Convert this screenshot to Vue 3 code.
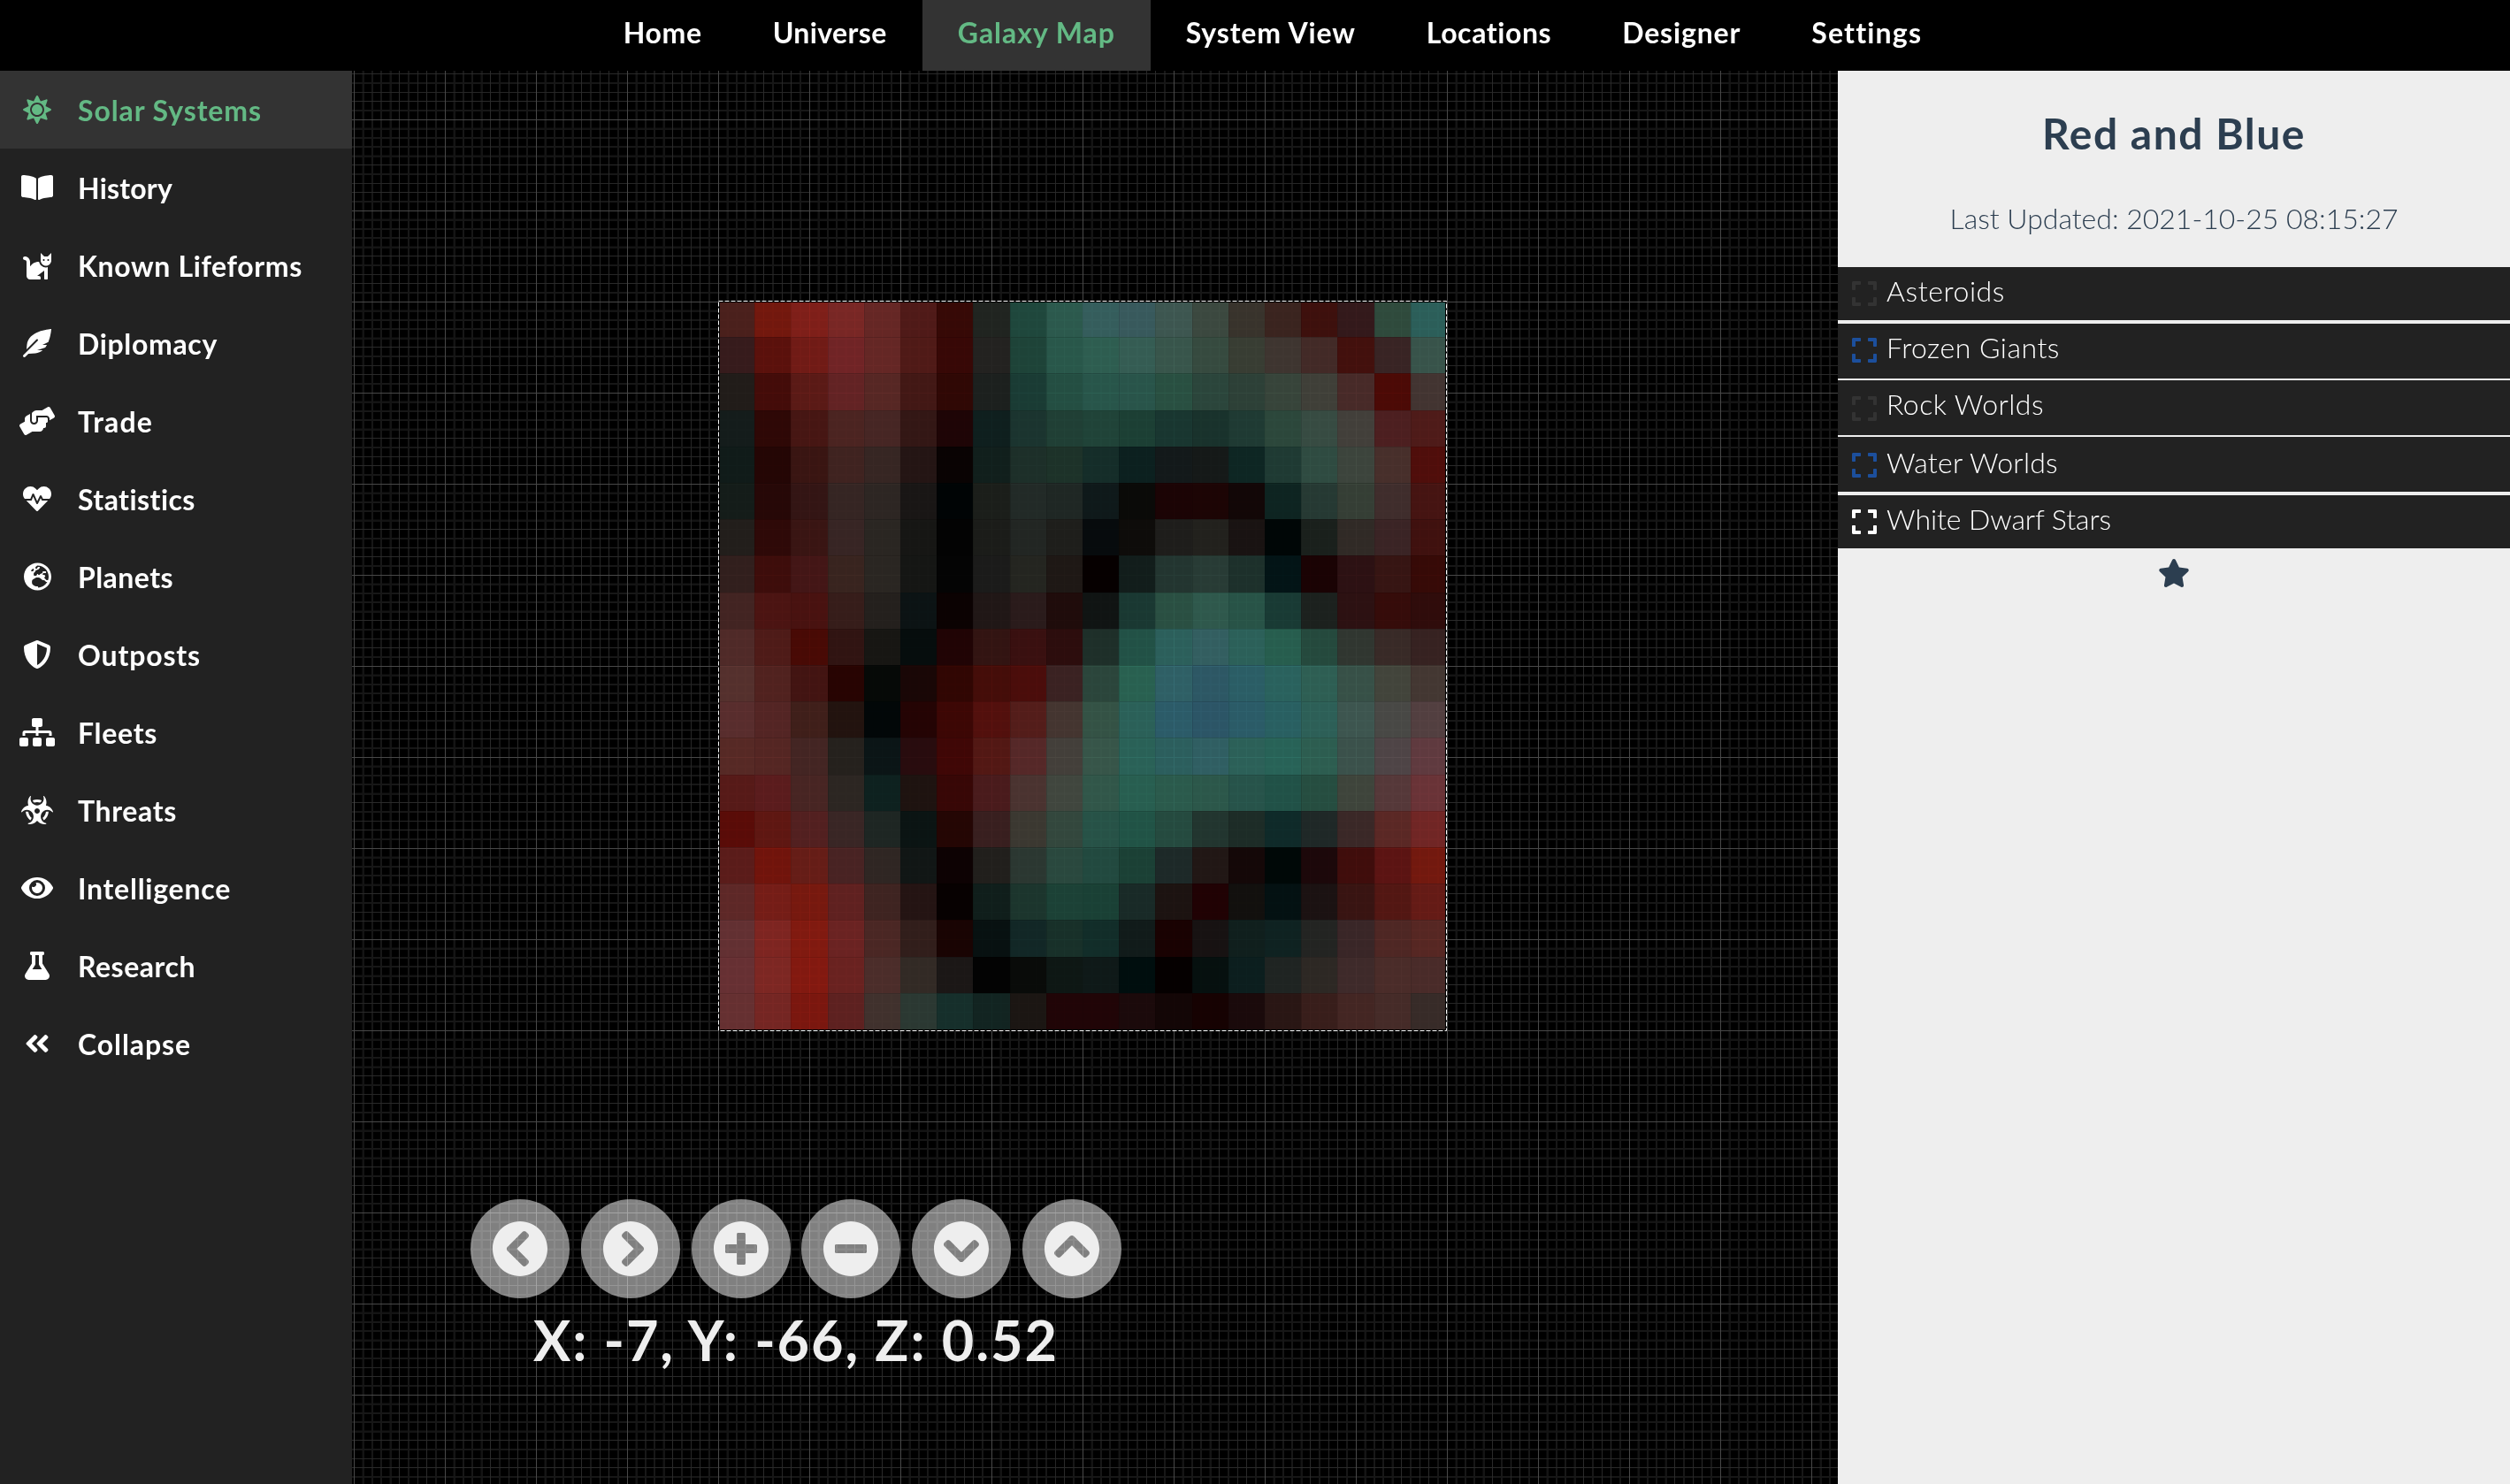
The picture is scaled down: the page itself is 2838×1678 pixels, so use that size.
<script setup>
const tabs = [
  { label: 'Home', width: 89 },
  { label: 'Universe', width: 129 },
  { label: 'Galaxy Map', width: 178, active: true },
  { label: 'System View', width: 192 },
  { label: 'Locations', width: 142 },
  { label: 'Designer', width: 134 },
  { label: 'Settings', width: 124 }
]

const menu = [
  { label: 'Solar Systems', width: 208, w: 512, active: true, path: 'M256 160c-52.9 0-96 43.1-96 96s43.1 96 96 96 96-43.1 96-96-43.1-96-96-96zm246.4 80.5l-94.7-47.3 33.5-100.4c4.5-13.6-8.4-26.5-21.9-21.9l-100.4 33.5-47.4-94.8c-6.4-12.8-24.6-12.8-31 0l-47.3 94.7L92.7 70.8c-13.6-4.5-26.5 8.4-21.9 21.9l33.5 100.4-94.7 47.4c-12.8 6.4-12.8 24.6 0 31l94.7 47.3-33.5 100.5c-4.5 13.6 8.4 26.5 21.9 21.9l100.4-33.5 47.3 94.7c6.4 12.8 24.6 12.8 31 0l47.3-94.7 100.4 33.5c13.6 4.5 26.5-8.4 21.9-21.9l-33.5-100.4 94.7-47.3c13-6.5 13-24.7.2-31.1zm-155.9 106c-49.9 49.9-131.1 49.9-181 0-49.9-49.9-49.9-131.1 0-181 49.9-49.9 131.1-49.9 181 0 49.9 49.9 49.9 131.1 0 181z' },
  { label: 'History', width: 107, w: 576, path: 'M542.22 32.05c-54.8 3.11-163.72 14.43-230.96 55.59-4.64 2.84-7.27 7.89-7.27 13.17v363.87c0 11.55 12.63 18.85 23.28 13.49 69.18-34.82 169.23-44.32 218.7-46.92 16.89-.89 30.02-14.43 30.02-30.66V62.75c.01-17.71-15.35-31.74-33.77-30.7zM264.73 87.64C197.5 46.48 88.58 35.17 33.78 32.05 15.36 31.01 0 45.04 0 62.75V400.6c0 16.24 13.13 29.78 30.02 30.66 49.49 2.6 149.59 12.11 218.77 46.95 10.62 5.35 23.21-1.94 23.21-13.46V100.63c0-5.29-2.62-10.14-7.27-12.99z' },
  { label: 'Known Lifeforms', width: 254, w: 512, path: 'M290.59 192c-20.18 0-106.82 1.98-162.59 85.95V192c0-52.94-43.06-96-96-96-17.67 0-32 14.33-32 32s14.33 32 32 32c17.64 0 32 14.36 32 32v256c0 35.3 28.7 64 64 64h176c8.84 0 16-7.16 16-16v-16c0-17.67-14.33-32-32-32h-32l128-96v144c0 8.84 7.16 16 16 16h32c8.84 0 16-7.16 16-16V289.86c-10.29 2.67-20.89 4.54-32 4.54-61.81 0-113.52-44.05-125.41-102.4zM448 96h-64l-64-64v134.4c0 53.02 42.98 96 96 96s96-42.98 96-96V32l-64 64zm-72 80c-8.84 0-16-7.16-16-16s7.16-16 16-16 16 7.16 16 16-7.16 16-16 16zm80 0c-8.84 0-16-7.16-16-16s7.16-16 16-16 16 7.16 16 16-7.16 16-16 16z' },
  { label: 'Diplomacy', width: 158, w: 512, path: 'M512 0C460.22 3.56 96.44 38.2 71.01 287.61c-3.09 26.66-4.84 53.44-5.99 80.24l178.87-178.69c6.25-6.25 16.4-6.25 22.65 0s6.25 16.38 0 22.63L7.04 471.03c-9.38 9.37-9.38 24.57 0 33.94 9.38 9.37 24.59 9.37 33.98 0l57.13-57.07c42.09-.14 84.15-2.53 125.96-7.36 53.48-5.44 97.02-26.47 132.58-56.54H255.74l146.79-48.88c11.25-14.89 21.37-30.71 30.45-47.12h-81.14l106.54-53.21C500.29 132.86 510.19 26.26 512 0z' },
  { label: 'Trade', width: 85, w: 640, path: 'M488 192H336v56c0 39.7-32.3 72-72 72s-72-32.3-72-72V126.4l-64.9 39C107.8 176.9 96 197.8 96 220.2v47.3l-80 46.2C.7 322.5-4.6 342.1 4.3 357.4l80 138.6c8.8 15.3 28.4 20.5 43.7 11.7L231.4 448H368c35.3 0 64-28.7 64-64h16c17.7 0 32-14.3 32-32v-64h8c13.3 0 24-10.7 24-24v-48c0-13.3-10.7-24-24-24zm147.7-37.4L555.7 16C546.9.7 527.3-4.5 512 4.3L408.6 64H306.4c-12 0-23.7 3.4-33.9 9.7L239 94.6c-9.4 5.8-15 16.1-15 27.1V248c0 22.1 17.9 40 40 40s40-17.9 40-40v-88h184c30.9 0 56 25.1 56 56v28.5l80-46.2c15.3-8.9 20.5-28.4 11.7-43.7z' },
  { label: 'Statistics', width: 134, w: 512, path: 'M320.2 243.8l-49.7 99.4c-6 12.1-23.4 11.7-28.9-.6l-56.9-126.3-30 71.7H60.6l182.5 186.5c7.1 7.3 18.6 7.3 25.7 0L451.4 288H342.3l-22.1-44.2zM473.7 73.9l-2.4-2.5c-51.5-52.6-135.8-52.6-187.4 0L256 100l-27.9-28.5c-51.5-52.7-135.9-52.7-187.4 0l-2.4 2.4C-10.4 123.7-12.5 203 31 256h102.4l35.9-86.2c5.4-12.9 23.6-13.1 29.4-.4l58.2 129.3 49-97.9c5.9-11.8 22.7-11.8 28.6 0l27.6 55.2H481c43.5-53 41.4-132.3-7.3-182.1z' },
  { label: 'Planets', width: 108, w: 496, path: 'M248 8C111 8 0 119 0 256s111 248 248 248 248-111 248-248S385 8 248 8zm200 248c0 22.5-3.9 44.2-10.8 64.4h-20.3c-4.3 0-8.4-1.7-11.4-4.8l-32-32.6c-4.5-4.6-4.5-12.1.1-16.7l12.5-12.5v-8.7c0-3-1.2-5.9-3.3-8l-9.4-9.4c-2.1-2.1-5-3.3-8-3.3h-16c-6.2 0-11.3-5.1-11.3-11.3 0-3 1.2-5.9 3.3-8l9.4-9.4c2.1-2.1 5-3.3 8-3.3h32c6.2 0 11.3-5.1 11.3-11.3v-9.4c0-6.2-5.1-11.3-11.3-11.3h-36.7c-8.8 0-16 7.2-16 16v4.5c0 6.9-4.4 13-10.9 15.2l-31.6 10.5c-3.3 1.1-5.5 4.1-5.5 7.6v2.2c0 4.4-3.6 8-8 8h-16c-4.4 0-8-3.6-8-8s-3.6-8-8-8H247c-3 0-5.8 1.7-7.2 4.4l-9.4 18.7c-2.7 5.4-8.2 8.8-14.3 8.8H194c-8.8 0-16-7.2-16-16V199c0-4.2 1.7-8.3 4.7-11.3l20.1-20.1c4.6-4.6 7.2-10.9 7.2-17.5 0-3.4 2.2-6.5 5.5-7.6l40-13.3c1.7-.6 3.2-1.5 4.4-2.7l26.8-26.8c2.1-2.1 3.3-5 3.3-8 0-6.2-5.1-11.3-11.3-11.3H258l-16 16v8c0 4.4-3.6 8-8 8h-16c-4.4 0-8-3.6-8-8v-20c0-2.5 1.2-4.9 3.2-6.4l28.9-21.7c1.9-.1 3.8-.3 5.7-.3C358.3 56 448 145.7 448 256zM130.1 149.1c0-3 1.2-5.9 3.3-8l25.4-25.4c2.1-2.1 5-3.3 8-3.3 6.2 0 11.3 5.1 11.3 11.3v16c0 3-1.2 5.9-3.3 8l-9.4 9.4c-2.1 2.1-5 3.3-8 3.3h-16c-6.2 0-11.3-5.1-11.3-11.3zm128 306.4v-7.1c0-8.8-7.2-16-16-16h-20.2c-10.8 0-26.7-5.3-35.4-11.8l-22.2-16.7c-11.5-8.6-18.2-22.1-18.2-36.4v-23.9c0-16 8.4-30.8 22.1-39l42.9-25.7c7.1-4.2 15.2-6.5 23.4-6.5h31.2c10.9 0 21.4 3.9 29.6 10.9l43.2 37.1h18.3c8.5 0 16.6 3.4 22.6 9.4l17.3 17.3c3.4 3.4 8.1 5.3 12.9 5.3H423c-32.4 58.9-93.8 99.5-164.9 103.1z' },
  { label: 'Outposts', width: 139, w: 512, path: 'M466.5 83.7l-192-80a48.15 48.15 0 0 0-36.9 0l-192 80C27.7 91.1 16 108.6 16 128c0 198.5 114.5 335.7 221.5 380.3 11.8 4.9 25.1 4.9 36.9 0C360.1 472.6 496 349.3 496 128c0-19.4-11.7-36.9-29.5-44.3zM256.1 446.3l-.1-381 175.9 73.3c-3.3 151.4-82.1 261.1-175.8 307.7z' },
  { label: 'Fleets', width: 90, w: 640, path: 'M128 352H32c-17.67 0-32 14.33-32 32v96c0 17.67 14.33 32 32 32h96c17.67 0 32-14.33 32-32v-96c0-17.67-14.33-32-32-32zm-24-80h192v48h48v-48h192v48h48v-57.59c0-21.17-17.23-38.41-38.41-38.41H344v-64h40c17.67 0 32-14.33 32-32V32c0-17.67-14.33-32-32-32H256c-17.67 0-32 14.33-32 32v96c0 17.67 14.33 32 32 32h40v64H94.41C73.23 224 56 241.23 56 262.41V320h48v-48zm264 80h-96c-17.67 0-32 14.33-32 32v96c0 17.67 14.33 32 32 32h96c17.67 0 32-14.33 32-32v-96c0-17.67-14.33-32-32-32zm240 0h-96c-17.67 0-32 14.33-32 32v96c0 17.67 14.33 32 32 32h96c17.67 0 32-14.33 32-32v-96c0-17.67-14.33-32-32-32z' },
  { label: 'Threats', width: 112, w: 576, path: 'M287.9 112c18.6 0 36.2 3.8 52.8 9.6 13.3-10.3 23.6-24.3 29.5-40.7-25.2-10.9-53-17-82.2-17-29.1 0-56.9 6-82.1 16.9 5.9 16.4 16.2 30.4 29.5 40.7 16.5-5.7 34-9.5 52.5-9.5zM163.6 438.7c12-11.8 20.4-26.4 24.5-42.4-32.9-26.4-54.8-65.3-58.9-109.6-8.5-2.8-17.2-4.6-26.4-4.6-7.6 0-15.2 1-22.5 3.1 4.1 62.8 35.8 118 83.3 153.5zm224.2-42.6c4.1 16 12.5 30.7 24.5 42.5 47.4-35.5 79.1-90.7 83-153.5-7.2-2-14.7-3-22.2-3-9.2 0-18 1.9-26.6 4.7-4.1 44.2-26 82.9-58.7 109.3zm113.5-205c-17.6-10.4-36.3-16.6-55.3-19.9 6-17.7 10-36.4 10-56.2 0-41-14.5-80.8-41-112.2-2.5-3-6.6-3.7-10-1.8-3.3 1.9-4.8 6-3.6 9.7 4.5 13.8 6.6 26.3 6.6 38.5 0 67.8-53.8 122.9-120 122.9S168 117 168 49.2c0-12.1 2.2-24.7 6.6-38.5 1.2-3.7-.3-7.8-3.6-9.7-3.4-1.9-7.5-1.2-10 1.8C134.6 34.2 120 74 120 115c0 19.8 3.9 38.5 10 56.2-18.9 3.3-37.7 9.5-55.3 19.9-34.6 20.5-61 53.3-74.3 92.4-1.3 3.7.2 7.7 3.5 9.8 3.3 2 7.5 1.3 10-1.6 9.4-10.8 19-19.1 29.2-25.1 57.3-33.9 130.8-13.7 163.9 45 33.1 58.7 13.4 134-43.9 167.9-10.2 6.1-22 10.4-35.8 13.4-3.7.8-6.4 4.2-6.4 8.1.1 4 2.7 7.3 6.5 8 39.7 7.8 80.6.8 115.2-19.7 18-10.6 32.9-24.5 45.3-40.1 12.4 15.6 27.3 29.5 45.3 40.1 34.6 20.5 75.5 27.5 115.2 19.7 3.8-.7 6.4-4 6.5-8 0-3.9-2.6-7.3-6.4-8.1-13.9-2.9-25.6-7.3-35.8-13.4-57.3-33.9-77-109.2-43.9-167.9s106.6-78.9 163.9-45c10.2 6.1 19.8 14.3 29.2 25.1 2.5 2.9 6.7 3.6 10 1.6s4.8-6.1 3.5-9.8c-13.1-39.1-39.5-72-74.1-92.4zm-213.4 129c-26.5 0-48-21.5-48-48s21.5-48 48-48 48 21.5 48 48-21.5 48-48 48z' },
  { label: 'Intelligence', width: 173, w: 576, path: 'M572.52 241.4C518.29 135.59 410.93 64 288 64S57.68 135.64 3.48 241.41a32.35 32.35 0 0 0 0 29.19C57.71 376.41 165.07 448 288 448s230.32-71.64 284.52-177.41a32.35 32.35 0 0 0 0-29.19zM288 400a144 144 0 1 1 144-144 143.93 143.93 0 0 1-144 144zm0-240a95.31 95.31 0 0 0-25.31 3.79 47.85 47.85 0 0 1-66.9 66.9A95.78 95.78 0 1 0 288 160z' },
  { label: 'Research', width: 133, w: 448, path: 'M437.2 403.5L320 215V64h8c13.3 0 24-10.7 24-24V24c0-13.3-10.7-24-24-24H120c-13.3 0-24 10.7-24 24v16c0 13.3 10.7 24 24 24h8v151L10.8 403.5C-18.5 450.6 15.3 512 70.9 512h306.2c55.7 0 89.4-61.5 60.1-108.5zM137.9 320l48.2-77.6c3.7-5.2 5.8-11.6 5.8-18.4V64h64v160c0 6.9 2.2 13.2 5.8 18.4l48.2 77.6h-172z' },
  { label: 'Collapse', width: 128, w: 448, path: 'M223.7 239l136-136c9.4-9.4 24.6-9.4 33.9 0l22.6 22.6c9.4 9.4 9.4 24.6 0 33.9L319.9 256l96.4 96.4c9.4 9.4 9.4 24.6 0 33.9L393.7 409c-9.4 9.4-24.6 9.4-33.9 0l-136-136c-9.5-9.4-9.5-24.6-.1-34zm-192 34l136 136c9.4 9.4 24.6 9.4 33.9 0l22.6-22.6c9.4-9.4 9.4-24.6 0-33.9L127.9 256l96.4-96.4c9.4-9.4 9.4-24.6 0-33.9L201.7 103c-9.4-9.4-24.6-9.4-33.9 0l-136 136c-9.5 9.4-9.5 24.6-.1 34z' }
]

const chevron = 'M256 504C119 504 8 393 8 256S119 8 256 8s248 111 248 248-111 248-248 248zM142.1 273l135.5 135.5c9.4 9.4 24.6 9.4 33.9 0l17-17c9.4-9.4 9.4-24.6 0-33.9L226.9 256l101.6-101.6c9.4-9.4 9.4-24.6 0-33.9l-17-17c-9.4-9.4-24.6-9.4-33.9 0L142.1 239c-9.4 9.4-9.4 24.6 0 34z'
const disc = 'M256 8C119 8 8 119 8 256s111 248 248 248 248-111 248-248S393 8 256 8z'
const controls = [
  { name: 'Left', path: chevron, turn: 0 },
  { name: 'Right', path: chevron, turn: 180 },
  { name: 'Zoom in', path: disc + 'm144 276c0 6.6-5.4 12-12 12h-92v92c0 6.6-5.4 12-12 12h-56c-6.6 0-12-5.4-12-12v-92h-92c-6.6 0-12-5.4-12-12v-56c0-6.6 5.4-12 12-12h92v-92c0-6.6 5.4-12 12-12h56c6.6 0 12 5.4 12 12v92h92c6.6 0 12 5.4 12 12v56z', turn: 0 },
  { name: 'Zoom out', path: disc + 'M124 296c-6.6 0-12-5.4-12-12v-56c0-6.6 5.4-12 12-12h264c6.6 0 12 5.4 12 12v56c0 6.6-5.4 12-12 12H124z', turn: 0 },
  { name: 'Down', path: chevron, turn: 270 },
  { name: 'Up', path: chevron, turn: 90 }
]

const expand = 'M0 180V56c0-13.3 10.7-24 24-24h124c6.6 0 12 5.4 12 12v40c0 6.6-5.4 12-12 12H64v84c0 6.6-5.4 12-12 12H12c-6.6 0-12-5.4-12-12zM288 44v40c0 6.6 5.4 12 12 12h84v84c0 6.6 5.4 12 12 12h40c6.6 0 12-5.4 12-12V56c0-13.3-10.7-24-24-24H300c-6.6 0-12 5.4-12 12zm148 276h-40c-6.6 0-12 5.4-12 12v84h-84c-6.6 0-12 5.4-12 12v40c0 6.6 5.4 12 12 12h124c13.3 0 24-10.7 24-24V332c0-6.6-5.4-12-12-12zM160 468v-40c0-6.6-5.4-12-12-12H64v-84c0-6.6-5.4-12-12-12H12c-6.6 0-12 5.4-12 12v124c0 13.3 10.7 24 24 24h124c6.6 0 12-5.4 12-12z'
const layers = [
  { label: 'Asteroids', width: 134, color: '#333333' },
  { label: 'Frozen Giants', width: 196, color: '#1c4f9c' },
  { label: 'Rock Worlds', width: 178, color: '#333333' },
  { label: 'Water Worlds', width: 194, color: '#1c4f9c' },
  { label: 'White Dwarf Stars', width: 254, color: '#ffffff' }
]

// Sector colours, twenty rows of twenty.
const sectors = `
4a201c 72180e 7e1f19 782725 652725 4f1a18 360906 202420 1f473c 2c594d 355d5c 38595c 3d5650 3b483f 38332c 3a241f 3d100d 33191b 2f4a3c 2c5e59
361b1c 5a110c 701b16 702426 642725 4f1a17 370806 232220 1e4338 29574a 2e5d50 355c53 38554b 364a3f 383d33 3e3530 422a27 42100d 382424 38534a
211c19 430c09 5a1a16 622324 562724 421815 2f0805 1c201e 1a3b34 244e42 28554a 29544a 294f41 2b453b 2d4037 37443a 3f3f38 472a28 4b0a06 423431
141c1b 2e0806 461613 4b2421 462624 331715 1e0506 0f1f1e 1b342f 203f35 204338 1c3f34 193630 19322c 1f3a33 2c473b 374b42 423f3a 4c1f20 4e1b19
101b19 240605 391512 3f2320 362623 241514 090303 111f1c 1d2f29 1d3229 152d29 0c201f 13191a 151918 0e2623 1f3a33 2f4b41 3c443c 472f2b 4f0e0b
141c19 260807 331514 352523 2d2623 191615 000405 1b1e1a 222a27 1f2724 0f191a 0a0a08 1b0405 1c0505 120707 0e2421 263933 353e35 3f2d2c 451412
221e1b 2e0908 391513 372524 2a2622 161614 030303 1b1c19 222623 1e1e1b 070b0d 0e0c0a 1e1d1b 22211d 191312 000606 1a201c 302a26 3a2425 3f110f
311f1d 3d0d0b 431616 38241f 2a2622 151614 040404 1b1b1a 242520 1e1815 060000 121d1b 233530 283b35 1d302b 031416 1a0304 2c1113 361513 360a07
422422 4b1412 481210 361d1a 24201d 0c1314 0b0202 201716 2a1b1b 1f0c0b 101413 1a3832 2a4f42 2f584c 285347 193a34 1c211e 2c1112 350c0a 2f0c0b
4f2a28 4e1b18 480a05 301412 171613 060d0d 200405 321412 391010 2c0d0d 1e2f29 225146 2c5f5b 335e60 2c6059 275d4e 25493d 303630 382a27 362221
54302d 50221f 421412 270402 060907 190706 300603 440d09 4a0d0b 3a2222 2b453b 296050 2f5f65 2d5764 2b5d65 2a615d 2e5e53 375047 42443b 433732
582d2d 532524 3f1f1a 22130f 020708 240404 3c0705 52100d 531d1a 443530 345245 2b6058 2c5b68 2c5566 2b5b67 295f61 2d5f57 3d554f 484845 523f40
562925 542623 432523 25211d 0b1516 280c0e 3f0706 521814 552828 433f3a 375549 2a6157 2c5e5d 305e62 2c6058 286257 2d5d50 3b514b 4e4446 5f3a3f
561a18 5a1c1d 472523 2c2622 0e211f 1e1310 370706 491b1c 4a3330 40463e 315649 285e50 2b5a4c 2c574a 27534a 215147 264d40 3e443b 553839 693337
590c08 5e1712 522020 392625 1e2623 0b1413 240604 381f1f 3b3831 33473d 275247 215346 254a3f 22352f 1d2c27 0f2a29 1f2827 3a2827 5a2825 702625
5a1c1a 70140c 651d17 482323 2f2623 111615 0d0203 211f1c 2b3731 2a483e 22493f 1b4035 1d2928 211715 140808 000807 1c080a 3f0d0c 5b1413 72190f
5d2827 741d17 76190f 5f2120 3e2421 241413 070101 101e1b 1c352d 1c4136 1a4035 192a27 1c1311 200204 12100e 041112 1b1212 381412 521713 641b16
623032 7d2521 801a10 6a2322 4a2724 311e1b 190403 081111 122726 183029 122d29 111b1a 190202 171212 101f1d 0f2221 232422 392627 4e2724 562723
663033 7c2723 821910 692220 4b2d2a 322a25 1b1716 030303 090b09 0e1714 0f1918 000e0e 050000 06100f 0c1e1e 1f2422 2d2824 3e2a2a 4a2c29 492b29
653031 742623 7a170f 5d2120 40312d 2b3832 162f2b 122421 1b1613 200507 200507 1b0a0b 130606 160202 1a0a0b 291614 381e1b 432623 452b28 372b28
`.trim().split('\n').map((row) => row.split(' '))

const cell = 41.2
const edge = (i) => Math.round(i * cell)

// Fine divisions inside one 103px grid square: offset, thickness, shade.
const ticks = [
  [9.5, 2.5, '#141414'], [20, 2, '#171717'], [30, 2, '#171717'], [40.5, 2.5, '#141414'],
  [51, 1, '#2a2a2a'], [61, 2, '#171717'], [72, 1, '#262626'], [82, 1, '#2a2a2a'], [92, 2, '#171717']
]

// Tracks each label so that it fills its designed width.
const vFit = {
  mounted(el, { value }) {
    const gap = value - el.getBoundingClientRect().width
    el.style.letterSpacing = (gap / el.textContent.length).toFixed(3) + 'px'
  }
}
</script>

<template>
  <div class="app">
    <nav class="topbar">
      <a v-for="t in tabs" :key="t.label" class="tab" :class="{ active: t.active }">
        <span v-fit="t.width">{{ t.label }}</span>
      </a>
    </nav>
    <div class="body">
      <aside class="sidebar">
        <a v-for="m in menu" :key="m.label" class="item" :class="{ active: m.active }">
          <span class="icon"><svg :viewBox="`0 0 ${m.w} 512`" :width="m.w / 16" height="32"><path :d="m.path" /></svg></span>
          <span v-fit="m.width" class="label">{{ m.label }}</span>
        </a>
      </aside>
      <main class="map">
        <svg class="canvas" width="1680" height="1598" viewBox="398 80 1680 1598">
          <defs>
            <pattern id="grid" x="400" y="32" width="103" height="103" patternUnits="userSpaceOnUse">
              <template v-for="t in ticks" :key="t[0]">
                <rect class="tick" :x="t[0]" y="0" :width="t[1]" height="103" :fill="t[2]" />
                <rect class="tick" x="0" :y="t[0]" width="103" :height="t[1]" :fill="t[2]" />
              </template>
              <rect width="1" height="103" fill="#484848" />
              <rect width="103" height="1" fill="#484848" />
            </pattern>
          </defs>
          <rect x="398" y="80" width="1680" height="1598" fill="url(#grid)" />
          <rect x="812" y="340" width="824" height="826" fill="#000" />
          <g transform="translate(812 340)">
            <template v-for="(row, r) in sectors" :key="r">
              <rect
                v-for="(c, i) in row" :key="i"
                :x="i ? edge(i) : 2" :y="r ? edge(r) : 2"
                :width="(i === 19 ? 822 : edge(i + 1)) - (i ? edge(i) : 2)"
                :height="edge(r + 1) - (r ? edge(r) : 2)"
                :fill="'#' + c"
              />
            </template>
            <g class="seams">
              <template v-for="n in 19" :key="n">
                <rect :x="edge(n)" y="2" width="1" height="822" />
                <rect x="2" :y="edge(n)" width="820" height="1" />
              </template>
            </g>
          </g>
          <rect class="glow" x="814" y="342" width="820" height="822" fill="url(#grid)" />
          <rect class="frame" x="812.5" y="340.5" width="823" height="825" />
        </svg>
        <div class="hud">
          <div class="controls">
            <button v-for="c in controls" :key="c.name" class="control" :aria-label="c.name">
              <svg viewBox="0 0 512 512" width="64" height="64"><path :d="c.path" :transform="`rotate(${c.turn} 256 256)`" /></svg>
            </button>
          </div>
          <div class="coords"><span v-fit="594">X: -7, Y: -66, Z: 0.52</span></div>
        </div>
      </main>
      <section class="panel">
        <h2><span v-fit="298">Red and Blue</span></h2>
        <p class="updated"><span v-fit="507">Last Updated: 2021-10-25 08:15:27</span></p>
        <ul class="layers">
          <li v-for="l in layers" :key="l.label">
            <svg viewBox="0 0 448 512" width="28" height="32" :fill="l.color"><path :d="expand" /></svg>
            <span v-fit="l.width">{{ l.label }}</span>
          </li>
        </ul>
        <svg class="star" viewBox="0 0 576 512" width="36" height="32"><path d="M259.3 17.8L194 150.2 47.9 171.5c-26.2 3.8-36.7 36.1-17.7 54.6l105.7 103-25 145.5c-4.5 26.3 23.2 46 46.4 33.7L288 439.6l130.7 68.7c23.2 12.2 50.9-7.4 46.4-33.7l-25-145.5 105.7-103c19-18.5 8.5-50.8-17.7-54.6L382 150.2 316.7 17.8c-11.7-23.6-45.6-23.9-57.4 0z" /></svg>
      </section>
    </div>
  </div>
</template>

<style>
body {
  margin: 0;
  background: #000;
}
</style>

<style scoped>
.app {
  width: 2838px;
  height: 1678px;
  overflow: hidden;
  display: flex;
  flex-direction: column;
  background: #000;
  color: #2c3e50;
  font-family: Lato, "Open Sans", sans-serif;
  font-size: 32px;
  -webkit-font-smoothing: antialiased;
}
span {
  white-space: nowrap;
}
.topbar {
  height: 80px;
  padding-left: 40px;
  display: flex;
  justify-content: center;
  flex: none;
}
.tab {
  display: flex;
  padding: 0 40px;
  color: #fff;
  font-weight: 700;
  line-height: 74px;
}
.tab.active,
.item.active {
  background: #333;
  color: #63b984;
}
.body {
  flex: 1;
  display: flex;
  min-height: 0;
}
.sidebar {
  width: 398px;
  flex: none;
  background: #222;
}
.item {
  height: 88px;
  display: flex;
  align-items: center;
  color: #fff;
  font-weight: 700;
}
.icon {
  width: 40px;
  margin: 0 26px 0 22px;
  display: flex;
  justify-content: center;
}
.icon svg {
  fill: currentColor;
}
.label {
  padding-top: 2px;
  line-height: 86px;
}
.map {
  position: relative;
  width: 1680px;
  flex: none;
  background: #000;
}
.canvas {
  display: block;
}
.tick {
  mix-blend-mode: lighten;
}
.seams {
  fill: #000;
  opacity: 0.13;
}
.glow {
  mix-blend-mode: color-dodge;
  opacity: 0.32;
}
.frame {
  fill: none;
  stroke: #fff;
  stroke-width: 1;
  stroke-dasharray: 5 2;
}
.hud {
  position: absolute;
  left: 134px;
  top: 1276px;
  width: 736px;
}
.controls {
  display: flex;
  justify-content: space-between;
}
.control {
  width: 112px;
  height: 112px;
  padding: 24px;
  border: 0;
  border-radius: 50%;
  background: rgba(255, 255, 255, 0.5);
}
.control svg {
  display: block;
  fill: #eee;
}
.coords {
  margin-top: 7px;
  text-align: center;
  font-size: 63px;
  font-weight: 700;
  line-height: 80px;
  color: #eee;
}
.panel {
  flex: 1;
  background: #eee;
  display: flex;
  flex-direction: column;
  align-items: center;
}
h2 {
  margin: 39px 0 0;
  font-size: 48px;
  line-height: 64px;
}
.updated {
  margin: 41px 0 32px;
  font-weight: 300;
  line-height: 46px;
}
.layers {
  align-self: stretch;
  list-style: none;
  margin: 0 0 12px;
  padding: 0;
  font-weight: 300;
}
.layers li {
  height: 62px;
  margin-bottom: 2px;
  padding-left: 16px;
  display: flex;
  gap: 11px;
  background: #222;
  color: #fff;
  line-height: 54px;
}
.layers li:first-child {
  height: 60px;
  margin-bottom: 4px;
}
.layers li:nth-child(4) {
  margin-bottom: 4px;
  line-height: 57px;
}
.layers li:last-child {
  height: 60px;
  margin-bottom: 0;
}
.layers svg {
  margin-top: 14px;
  flex: none;
}
.layers li:nth-child(3) svg,
.layers li:nth-child(4) svg {
  margin-top: 16px;
}
.star {
  fill: #2c3e50;
}
</style>
